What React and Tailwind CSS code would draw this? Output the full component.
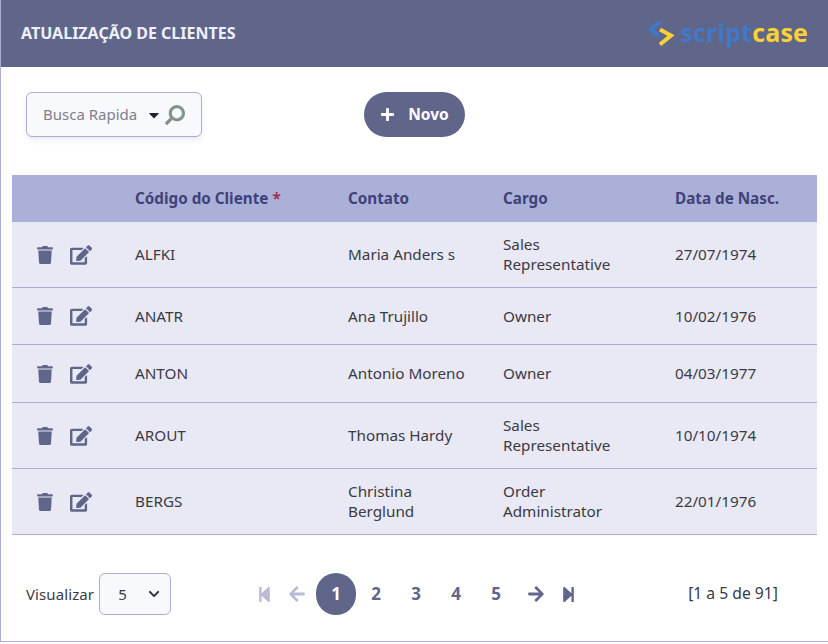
import { FaTrash, FaEdit, FaSearch, FaPlus, FaArrowLeft, FaArrowRight, FaStepBackward, FaStepForward, FaCaretDown, FaChevronDown } from "react-icons/fa";

const rows = [
  { code: "ALFKI", contact: "Maria Anders s", role: "Sales Representative", birth: "27/07/1974", h: "h-[66px]" },
  { code: "ANATR", contact: "Ana Trujillo", role: "Owner", birth: "10/02/1976", h: "h-[57px]" },
  { code: "ANTON", contact: "Antonio Moreno", role: "Owner", birth: "04/03/1977", h: "h-[58px]" },
  { code: "AROUT", contact: "Thomas Hardy", role: "Sales Representative", birth: "10/10/1974", h: "h-[66px]" },
  { code: "BERGS", contact: "Christina Berglund", role: "Order Administrator", birth: "22/01/1976", h: "h-[66px]" },
];

const cols = "grid grid-cols-[123px_213px_155px_172px_142px] items-center";

export default function App() {
  return (
    <div className="w-[828px] h-[642px] bg-white border-l border-b border-[#a9aed6] font-['Noto_Sans',sans-serif] text-[15px] text-[#3a3a44] overflow-hidden">
      <header className="h-[67px] bg-[#60658a] flex items-center justify-between pl-5 pr-5 -ml-px">
        <h1 className="text-[16px] font-bold text-[#eef0fa] pb-[2px] ml-px">ATUALIZAÇÃO DE CLIENTES</h1>
        <div className="flex items-center gap-[5px]">
          <svg width="27" height="27" viewBox="0 0 27 27" fill="none" strokeWidth="4">
            <polyline points="12,1.5 3,9.5 11,16" stroke="#3f78c9" />
            <polyline points="12,9.5 23,15.5 12,24.5" stroke="#fcd232" />
          </svg>
          <div className="text-[25px] leading-none font-bold font-['Open_Sans',sans-serif] tracking-[0.15px] pb-[2px]">
            <span className="text-[#4278c8]">script</span>
            <span className="text-[#fcd232]">case</span>
          </div>
        </div>
      </header>

      <div className="flex items-center pt-[25px] pl-[25px]">
        <div className="w-[176px] h-[45px] flex items-center pl-4 bg-[#f8f9fc] border border-[#a9aed6] rounded-md shadow-md shadow-[#a9aed6]/20">
          <span className="text-[#80808a]">Busca Rapida</span>
          <FaCaretDown className="ml-[9px] text-[#22222c] text-[16px]" />
          <FaSearch className="ml-[3px] text-[#84928c] text-[20px] -scale-x-100" />
        </div>
        <button className="ml-[162px] w-[101px] h-[45px] flex items-center justify-center gap-[13px] rounded-full bg-[#60658a] text-white font-bold text-[15.5px]">
          <FaPlus className="text-[15px]" />
          Novo
        </button>
      </div>

      <div className="mt-[38px] ml-[11px] w-[805px] text-[15.25px]">
        <div className={`${cols} h-[47px] bg-[#abb0d8] font-bold text-[#3f4279]`}>
          <span />
          <span>Código do Cliente <span className="text-[#a0304a]">*</span></span>
          <span>Contato</span>
          <span>Cargo</span>
          <span>Data de Nasc.</span>
        </div>
        {rows.map((row) => (
          <div key={row.code} className={`${cols} ${row.h} bg-[#e9e9f5] border-b border-[#a9aed6]`}>
            <div className="flex items-center gap-[16px] pl-6 text-[#60658a]">
              <FaTrash className="text-[18px]" />
              <FaEdit className="text-[22px]" />
            </div>
            <span>{row.code}</span>
            <span className="leading-5 pr-[28px] -mt-px">{row.contact}</span>
            <span className="leading-5 pr-8 -mt-px">{row.role}</span>
            <span>{row.birth}</span>
          </div>
        ))}
      </div>

      <footer className="flex items-center mt-[38px] pl-[25px] h-[42px]">
        <span className="tracking-[0.1px]">Visualizar</span>
        <div className="ml-[5px] w-[72px] h-[42px] flex items-center justify-between pl-[18px] pr-[10px] bg-[#f8f9fc] border border-[#a9aed6] rounded-md">
          <span>5</span>
          <FaChevronDown className="text-[12px] text-[#33333d]" />
        </div>
        <nav className="ml-[85px] flex items-center text-[#60658a] font-bold text-[17px]">
          <FaStepBackward className="text-[#b9bbd2] text-[17px] mr-[15px]" />
          <FaArrowLeft className="text-[#b9bbd2] text-[18px] mr-[10px]" />
          <span className="w-10 h-[42px] flex items-center justify-center rounded-full bg-[#60658a] text-white">1</span>
          <span className="w-10 text-center">2</span>
          <span className="w-10 text-center">3</span>
          <span className="w-10 text-center">4</span>
          <span className="w-10 text-center">5</span>
          <FaArrowRight className="text-[18px] ml-[11px]" />
          <FaStepForward className="text-[17px] ml-[15px]" />
        </nav>
        <span className="ml-[111px] text-[15.7px]">[1 a 5 de 91]</span>
      </footer>
    </div>
  );
}
